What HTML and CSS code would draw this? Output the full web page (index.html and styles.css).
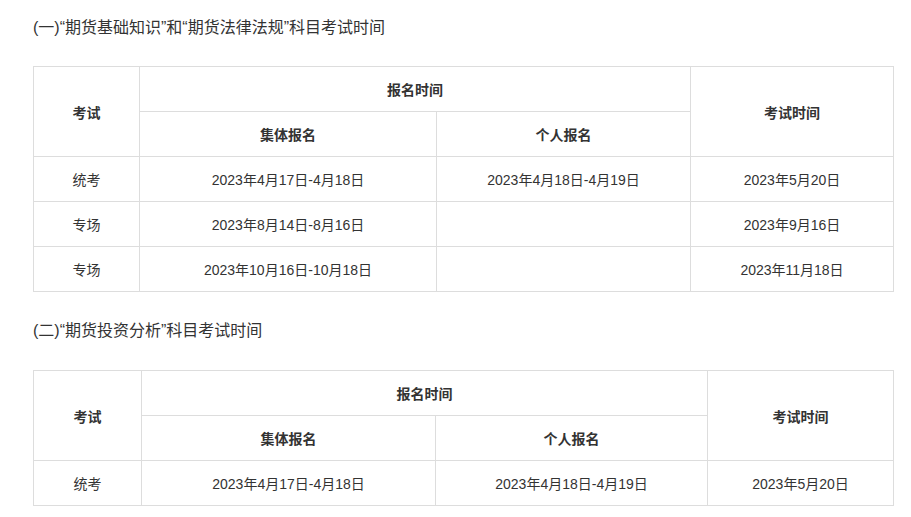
FILE: index.html
```html
<!DOCTYPE html>
<html lang="zh-CN">
<head>
<meta charset="utf-8">
<link rel="stylesheet" href="styles.css">
</head>
<body>
<div class="page">
  <p class="title">(一)“期货基础知识”和“期货法律法规”科目考试时间</p>
  <table class="grid t1">
    <colgroup><col class="c1"><col class="c2"><col class="c3"><col class="c4"></colgroup>
    <tr><th rowspan="2">考试</th><th colspan="2">报名时间</th><th rowspan="2">考试时间</th></tr>
    <tr><th>集体报名</th><th>个人报名</th></tr>
    <tr><td>统考</td><td>2023年4月17日-4月18日</td><td>2023年4月18日-4月19日</td><td>2023年5月20日</td></tr>
    <tr><td>专场</td><td>2023年8月14日-8月16日</td><td></td><td>2023年9月16日</td></tr>
    <tr><td>专场</td><td>2023年10月16日-10月18日</td><td></td><td>2023年11月18日</td></tr>
  </table>
  <p class="title second">(二)“期货投资分析”科目考试时间</p>
  <table class="grid t2">
    <colgroup><col class="c1"><col class="c2"><col class="c3"><col class="c4"></colgroup>
    <tr><th rowspan="2">考试</th><th colspan="2">报名时间</th><th rowspan="2">考试时间</th></tr>
    <tr><th>集体报名</th><th>个人报名</th></tr>
    <tr><td>统考</td><td>2023年4月17日-4月18日</td><td>2023年4月18日-4月19日</td><td>2023年5月20日</td></tr>
  </table>
</div>
</body>
</html>
```
FILE: styles.css
```css
html, body {
  margin: 0;
  padding: 0;
  background: #fff;
}
body {
  font-family: "Liberation Sans", Arial, "Noto Sans CJK SC", sans-serif;
  color: #333;
}
.page {
  padding: 16px 0 0 33px;
  width: 860px;
}
.title {
  margin: 0;
  font-size: 16px;
  line-height: 24px;
  color: #333;
}
.title.second {
  margin-top: 27px;
}
.grid {
  border-collapse: collapse;
  width: 860px;
  table-layout: fixed;
  margin-top: 26px;
  font-size: 14px;
}
.t2 { margin-top: 27px; }
.grid th, .grid td {
  border: 1px solid #ddd;
  height: 45px;
  padding: 0;
  text-align: center;
  vertical-align: middle;
  box-sizing: border-box;
  color: #333;
}
.grid th {
  font-weight: bold;
  font-size: 14px;
}
.t1 .c1 { width: 106px; }
.t1 .c2 { width: 297px; }
.t1 .c3 { width: 254px; }
.t1 .c4 { width: 203px; }
.t2 .c1 { width: 108px; }
.t2 .c2 { width: 294px; }
.t2 .c3 { width: 272px; }
.t2 .c4 { width: 186px; }
```
